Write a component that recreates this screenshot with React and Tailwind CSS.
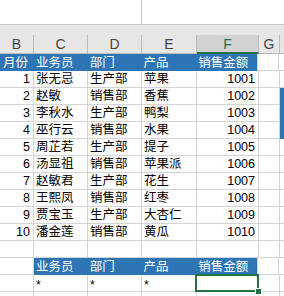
import React from "react";

const W = ["w-[34px]", "w-[54px]", "w-[54px]", "w-[55px]", "w-[62px]", "w-[21px]"];
const letters = ["B", "C", "D", "E", "F", "G"];

const rows = [
    [1, "张无忌", "生产部", "苹果", 1001],
    [2, "赵敏", "销售部", "香蕉", 1002],
    [3, "李秋水", "生产部", "鸭梨", 1003],
    [4, "巫行云", "销售部", "水果", 1004],
    [5, "周芷若", "生产部", "提子", 1005],
    [6, "汤显祖", "销售部", "苹果派", 1006],
    [7, "赵敏君", "生产部", "花生", 1007],
    [8, "王熙凤", "销售部", "红枣", 1008],
    [9, "贾宝玉", "生产部", "大杏仁", 1009],
    [10, "潘金莲", "销售部", "黄瓜", 1010],
];

function Cell({ i, children, right, className = "" }) {
    return (
        <div
            className={`${W[i]} shrink-0 h-full border-r border-b border-[#d4d4d4] flex items-center pt-[1px] ${right ? "justify-end pr-[3px]" : "pl-[2px]"} ${className}`}
        >
            {children}
        </div>
    );
}

function Tail({ blue }) {
    return <div className={`flex-1 h-full ${blue ? "bg-[#2e75b6]" : "border-b border-[#d4d4d4]"}`} />;
}

export default function App() {
    return (
        <div
            className="w-[284px] h-[296px] overflow-hidden bg-white text-black text-[12.5px] leading-none"
            style={{ fontFamily: '"Liberation Sans", "Noto Sans CJK SC", sans-serif' }}
        >
            {/* formula area */}
            <div className="h-[25px] flex border-b border-[#c6c6c6]">
                <div className="w-[142px] h-full border-r border-[#c6c6c6]" />
                <div className="flex-1" />
            </div>
            <div className="h-[10px] bg-[#e6e6e6]" />

            {/* column letters */}
            <div className="h-[19px] flex bg-[#e6e6e6] text-[14px] text-[#444]">
                {letters.map((l, i) => (
                    <div
                        key={l}
                        className={`${W[i]} shrink-0 h-full border-r border-[#bcbcbc] flex items-center justify-center ${l === "F" ? "bg-[#d2d2d2] text-[#217346] border-b-2 border-b-[#217346]" : "border-b border-b-[#bcbcbc]"}`}
                    >
                        {l}
                    </div>
                ))}
                <div className="flex-1 h-full border-b border-[#bcbcbc]" />
            </div>

            {/* table header */}
            <div className="h-[17px] flex text-white">
                <div className="w-[258px] shrink-0 h-full bg-[#2e75b6] flex items-center pt-[1px] border-r border-[#d4d4d4]">
                    <span className="w-[34px] pl-[3px]">月份</span>
                    <span className="w-[54px] pl-[2px]">业务员</span>
                    <span className="w-[54px] pl-[2px]">部门</span>
                    <span className="w-[55px] pl-[2px]">产品</span>
                    <span className="w-[61px] pl-[2px]">销售金额</span>
                </div>
                <Cell i={5} />
                <Tail />
            </div>

            {rows.map((r, k) => (
                <div key={r[0]} className="h-[17px] flex">
                    <Cell i={0} right>{r[0]}</Cell>
                    <Cell i={1}>{r[1]}</Cell>
                    <Cell i={2}>{r[2]}</Cell>
                    <Cell i={3}>{r[3]}</Cell>
                    <Cell i={4} right>{r[4]}</Cell>
                    <Cell i={5} />
                    <Tail blue={k >= 1 && k <= 3} />
                </div>
            ))}

            {/* empty row */}
            <div className="h-[17px] flex">
                {[0, 1, 2, 3, 4, 5].map((i) => <Cell key={i} i={i} />)}
                <Tail />
            </div>

            {/* criteria header */}
            <div className="h-[17px] flex">
                <Cell i={0} />
                <div className="w-[224px] shrink-0 h-full bg-[#2e75b6] text-white flex items-center pt-[1px] border-r border-[#d4d4d4]">
                    <span className="w-[54px] pl-[2px]">业务员</span>
                    <span className="w-[54px] pl-[2px]">部门</span>
                    <span className="w-[55px] pl-[2px]">产品</span>
                    <span className="w-[61px] pl-[2px]">销售金额</span>
                </div>
                <Cell i={5} />
                <Tail />
            </div>

            {/* criteria row */}
            <div className="h-[17px] flex">
                <Cell i={0} />
                <Cell i={1} className="pt-[4px]">*</Cell>
                <Cell i={2} className="pt-[4px]">*</Cell>
                <Cell i={3} className="pt-[4px]">*</Cell>
                <Cell i={4} className="relative">
                    <div className="absolute -left-[2px] -top-[1px] -right-[1px] -bottom-[1px] border-2 border-[#217346]" />
                    <div className="absolute -right-[3px] -bottom-[3px] w-[5px] h-[5px] bg-[#217346] outline outline-1 outline-white" />
                </Cell>
                <Cell i={5} />
                <Tail />
            </div>

            <div className="h-[17px] flex">
                {[0, 1, 2, 3, 4, 5].map((i) => <Cell key={i} i={i} />)}
                <Tail />
            </div>
        </div>
    );
}
